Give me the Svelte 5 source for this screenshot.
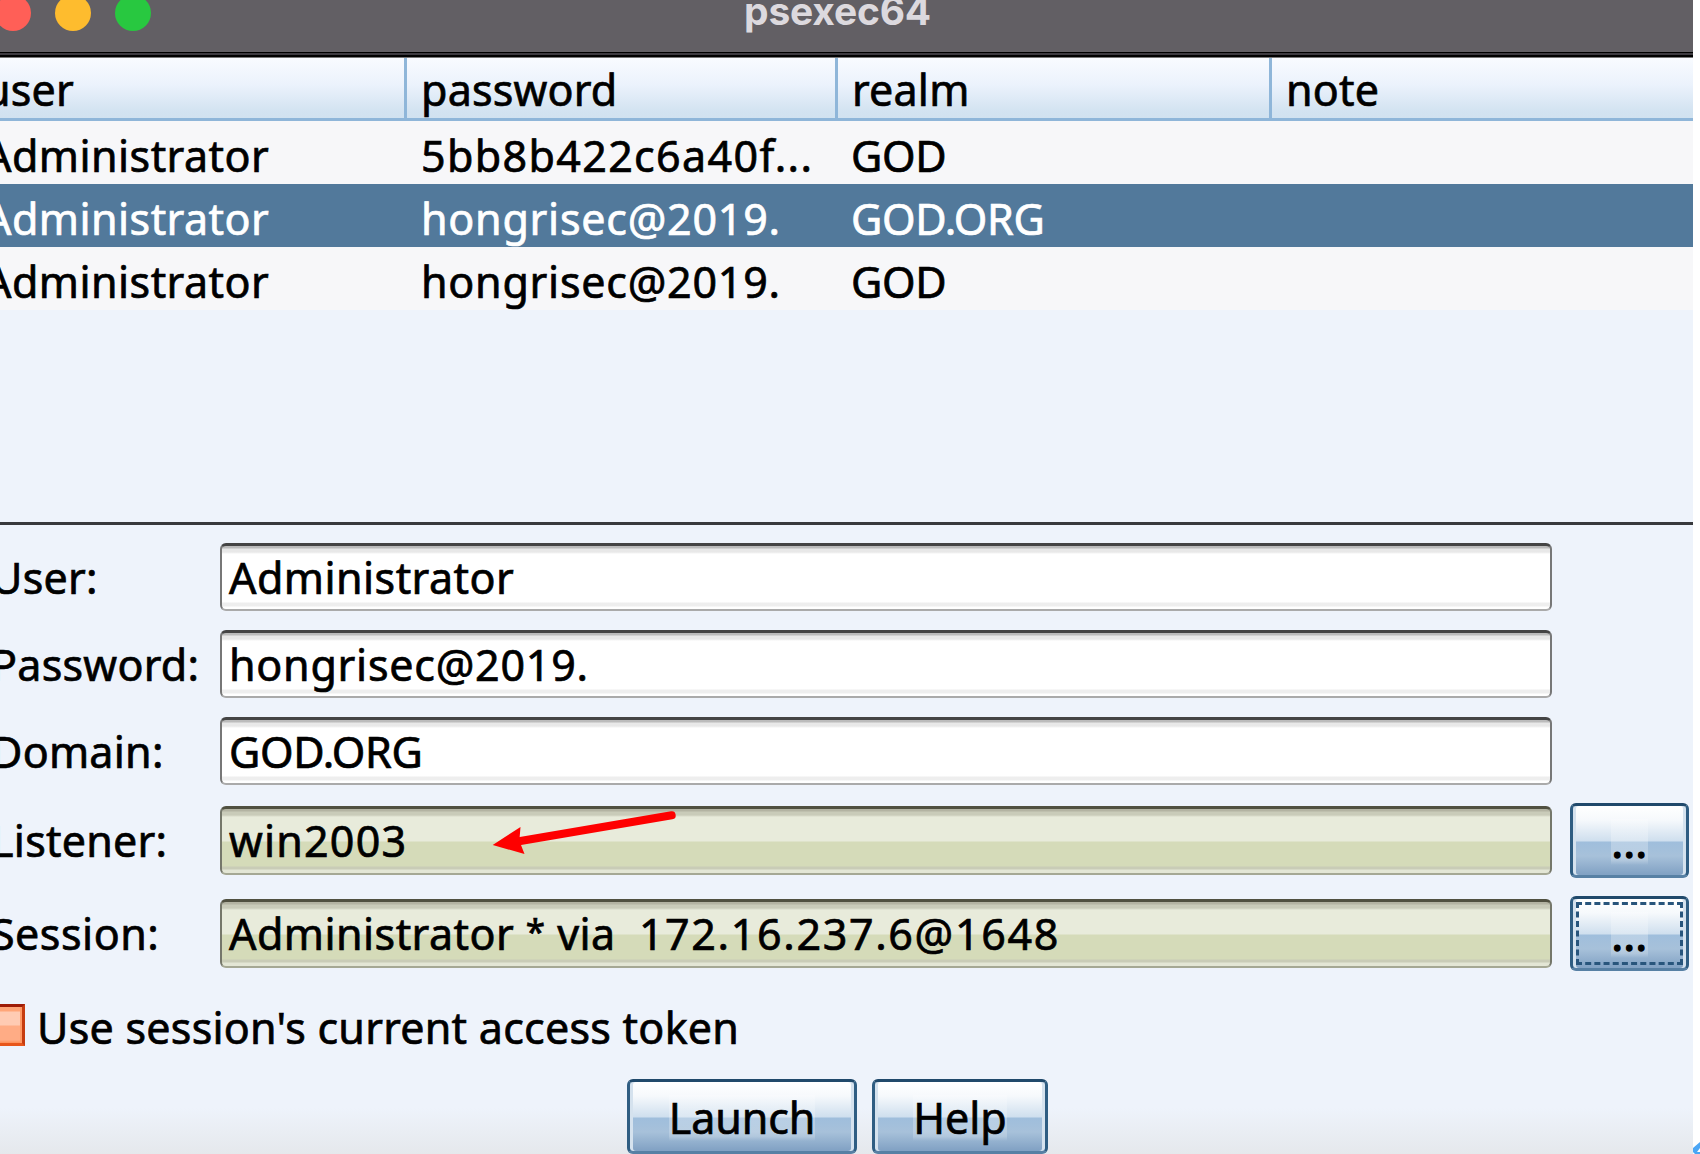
<script>
  const columns = ['user', 'password', 'realm', 'note'];
  const rows = [
    { user: 'Administrator', password: '5bb8b422c6a40f...', realm: 'GOD', hash: true },
    { user: 'Administrator', password: 'hongrisec@2019.', realm: 'GOD.ORG', selected: true },
    { user: 'Administrator', password: 'hongrisec@2019.', realm: 'GOD' }
  ];
  const fields = [
    { id: 'user', label: 'User:', value: 'Administrator' },
    { id: 'password', label: 'Password:', value: 'hongrisec@2019.' },
    { id: 'domain', label: 'Domain:', value: 'GOD.ORG' },
    { id: 'listener', label: 'Listener:', value: 'win2003', picker: true },
    { id: 'session', label: 'Session:', value: 'Administrator ', via: ' via  ', host: '172.16.237.6@1648', picker: true, focused: true }
  ];
</script>

<div class="screen">
  <main class="window">
    <header class="titlebar">
      <div class="lights"><i class="close"></i><i class="min"></i><i class="max"></i></div>
      <h1>psexec64</h1>
    </header>

    <section class="table">
      <div class="row head">
        {#each columns as column}<div class="cell">{column}</div>{/each}
      </div>
      {#each rows as row}
        <div class="row body" class:selected={row.selected}>
          <div class="cell">{row.user}</div>
          <div class="cell digits" class:hash={row.hash}>{row.password}</div>
          <div class="cell caps">{row.realm}</div>
          <div class="cell"></div>
        </div>
      {/each}
    </section>

    <section class="form">
      {#each fields as field}
        <div class="line {field.id}">
          <div class="label">{field.label}</div>
          <div class="field" class:readonly={field.picker}>{field.value}{#if field.host}<span class="star">*</span>{field.via}<span class="host">{field.host}</span>{/if}</div>
          {#if field.picker}
            <div class="btn pick" class:focused={field.focused}><span>...</span></div>
          {/if}
        </div>
      {/each}
      <div class="check"><i class="box"></i><span>Use session's current access token</span></div>
      <div class="actions">
        <div class="btn launch"><span>Launch</span></div>
        <div class="btn help"><span>Help</span></div>
      </div>
    </section>
  </main>

  <svg class="arrow" viewBox="0 0 190 50" width="190" height="50">
    <path d="M26 36.7 L181.7 10.3" stroke="#fe0000" stroke-width="8" stroke-linecap="round" />
    <path d="M2.7 40 L30.5 22 L29.5 34 L31 40 L34.5 49 Z" fill="#fe0000" />
  </svg>
  <svg class="corner" viewBox="0 0 7 12" width="7" height="12">
    <path d="M7 0 L0 6 V10 L2 12 H7 V10 H4 L7 6 Z" fill="#4ba6f5" />
  </svg>
</div>

<style>
  :global(body) { margin: 0; background: #fff; }
  .screen {
    position: relative;
    width: 1700px;
    height: 1154px;
    overflow: hidden;
    font: 43px/60px "Noto Sans", "Open Sans", sans-serif;
    letter-spacing: 0.45px;
    color: #000;
    -webkit-text-stroke: 0.7px currentColor;
  }
  /* The window runs past the left edge of the screen. */
  .window {
    display: flex;
    flex-direction: column;
    width: 1710px;
    height: 1154px;
    margin-left: -17px;
    background: linear-gradient(#eef3fb 0 1108px, #e5e8ec 1154px);
  }
  .window > *, .form > * { flex: none; }
  .titlebar {
    display: flex;
    box-sizing: border-box;
    height: 58px;
    background: #625f64;
    border-bottom: 1px solid #777;
    box-shadow: inset 0 -2px #000, inset 0 -4px #3d3a40, inset 0 -5px #000;
  }
  .lights { display: flex; gap: 24px; padding-left: 12px; margin-top: -5px; }
  .lights i { width: 36px; height: 36px; border-radius: 50%; }
  .close { background: #ff5f57; }
  .min { background: #febc2e; }
  .max { background: #28c840; }
  h1 {
    margin: -19px 0 0 593px;
    font: 700 39px/60px Inter, sans-serif;
    letter-spacing: -0.2px;
    color: #dcd9de;
    -webkit-text-stroke: 0;
  }
  .table { height: 464px; border-bottom: 3px solid #38393c; }
  .row { display: grid; grid-template-columns: 424px 431px 434px 421px; box-sizing: border-box; }
  .cell { box-sizing: border-box; padding-left: 14px; overflow: hidden; }
  .cell:first-child { padding-left: 1px; }
  .head {
    height: 63px;
    border-bottom: 3px solid #8fb6d9;
    background: linear-gradient(#f9fbff, #ebf2fc 45%, #d3e3f1 88%, #d1e2f0);
    letter-spacing: 0.2px;
  }
  .head .cell { height: 60px; border-right: 3px solid #8fb6d9; padding-top: 2px; }
  .head .cell:last-child { border-right: 0; }
  .body { height: 63px; padding-top: 5px; background: #f7f7f9; line-height: 58px; }
  .body .cell { padding-top: 1px; }
  .selected { background: #52799b; color: #fff; }
  .digits { letter-spacing: 0.75px; }
  .hash { letter-spacing: 1.35px; }
  .body .caps { letter-spacing: -0.3px; padding-left: 13px; }

  .form { display: flex; flex-direction: column; padding-top: 18px; }
  .line { display: grid; grid-template-columns: 237px 1332px 119px; align-items: start; height: 69px; margin-bottom: 18px; }
  .line.domain { margin-bottom: 17px; }
  .line.listener, .line.session { height: 76px; }
  .line.listener { margin-bottom: 17px; }
  .label { padding: 5px 0 0 8px; letter-spacing: 0.25px; }
  .field {
    box-sizing: border-box;
    height: 68px;
    padding: 2px 0 0 7px;
    border: 2px solid;
    border-color: #444 #777 #aaa #777;
    border-top-width: 3px;
    border-radius: 6px;
    background: linear-gradient(#bbb 0 2px, #e8e8e8 3px 6px, #fff 8px 56px, #eee 57px 60px, #fff 61px);
    white-space: pre;
  }
  .readonly {
    height: 69px;
    margin-top: 3px;
    border-color: #505040 #75776a #a5a894 #75776a;
    background: linear-gradient(#b3b3a2 0 2px, #c9cbb9 3px 6px, #e8ebdb 8px 32px, #d5dbb9 33px 57px, #c9ccb7 58px 60px, #e3e6d5 61px);
  }
  .listener .label { padding-top: 8px; }
  .session .label { padding-top: 8px; letter-spacing: 0.5px; }
  .domain .field { letter-spacing: -0.3px; }
  .password .field { letter-spacing: 0.75px; }
  .listener .field { letter-spacing: 1.2px; }
  .star { font-size: 35px; line-height: 1; vertical-align: 6px; }
  .host { letter-spacing: 1.65px; }
  .btn {
    display: flex;
    justify-content: center;
    box-sizing: border-box;
    height: 75px;
    border: 3px solid;
    border-color: #20496b #2f5d82 #5780a4;
    border-radius: 6px;
    background: linear-gradient(#fff 0, #f6f9fc 14px, #cfdfee 35px, #9fbedc 36px, #a7c1da 50px, #82a2c4 68px);
    box-shadow: inset 3px 0 #d5e2ee, inset -3px 0 #d5e2ee;
    letter-spacing: -0.1px;
  }
  .pick { position: relative; width: 119px; margin-left: 18px; letter-spacing: 0.5px; -webkit-text-stroke: 1.4px #000; }
  .btn span {
    height: 46px;
    margin-top: 13px;
    line-height: 46px;
    background: linear-gradient(#ffffff33, #ffffff44 50%, #ffffff33 90%, transparent);
  }
  /* Keyboard focus ring drawn inside the button. */
  .focused::after { content: ''; position: absolute; inset: 3px; border: 3px dashed #28557c; }
  .check { display: flex; align-items: center; height: 60px; margin-top: 5px; letter-spacing: 0.25px; }
  .check span { margin-left: 12px; padding-top: 5px; }
  .box {
    box-sizing: border-box;
    width: 42px;
    height: 42px;
    border: 3px solid;
    border-color: #9e1c08 #c63c10 #e8561a;
    background: linear-gradient(#ffa578 0 4px, #ffcbb3 5px 18px, #ffac85 19px 33px, #ff8e55);
    box-shadow: inset -2px 0 #ff9a66;
  }
  .actions { display: flex; gap: 15px; margin: 24px 0 0 644px; }
  .launch { width: 230px; }
  .help { width: 176px; }
  .arrow { position: absolute; left: 490px; top: 805px; }
  .corner { position: absolute; right: 0; bottom: 0; }
</style>
